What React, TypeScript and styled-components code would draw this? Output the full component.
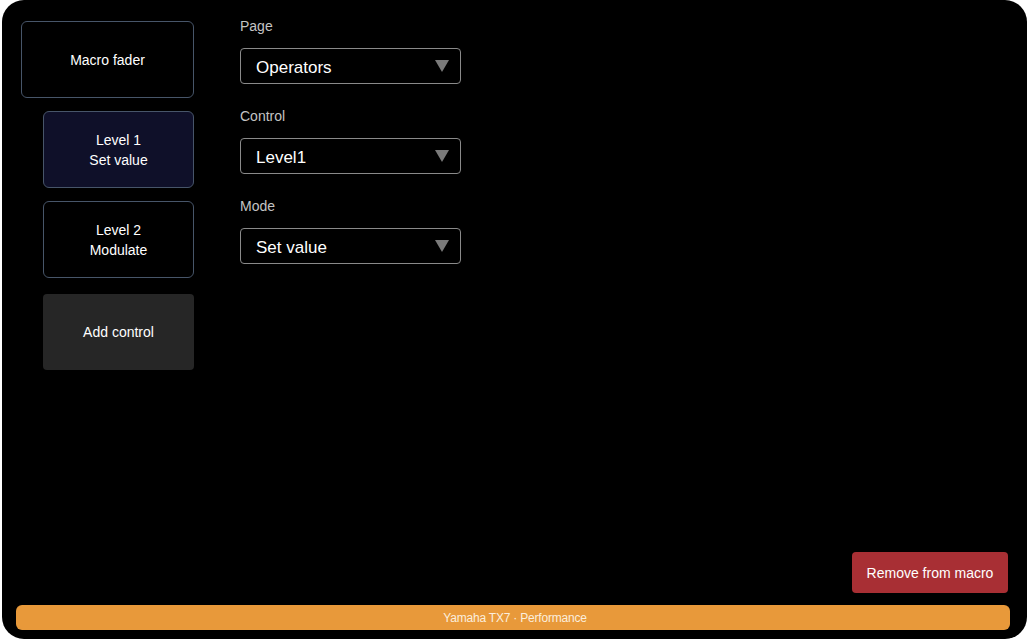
import styled, { createGlobalStyle } from "styled-components";

// ---------------------------------------------------------------------

const fields = [
  { label: "Page", value: "Operators" },
  { label: "Control", value: "Level1" },
  { label: "Mode", value: "Set value" },
];

export default function App() {
  return (
    <>
      <GlobalStyle />
      <Frame>
        <Body>
          <Sidebar>
            <MacroTile>Macro fader</MacroTile>
            <ControlTile $active>
              Level 1<br />
              Set value
            </ControlTile>
            <ControlTile>
              Level 2<br />
              Modulate
            </ControlTile>
            <AddTile>Add control</AddTile>
          </Sidebar>

          <Editor>
            {fields.map((f) => (
              <Field key={f.label}>
                <FieldLabel>{f.label}</FieldLabel>
                <Select>
                  <span>{f.value}</span>
                  <Caret viewBox="0 0 14 12">
                    <polygon points="0,0 14,0 7,12" />
                  </Caret>
                </Select>
              </Field>
            ))}
          </Editor>
        </Body>

        <ActionRow>
          <RemoveButton>Remove from macro</RemoveButton>
        </ActionRow>

        <StatusBar>Yamaha TX7 · Performance</StatusBar>
      </Frame>
    </>
  );
}

//style
const GlobalStyle = createGlobalStyle`
  html, body {
    margin: 0;
    background: #ffffff;
    font-family: "Liberation Sans", Arial, sans-serif;
  }
`;

const Frame = styled.div`
  margin-left: 2px;
  width: 1025px;
  height: 639px;
  border-radius: 22px;
  background: #000000;
  display: flex;
  flex-direction: column;
  box-sizing: border-box;
  padding: 0 17px 9px 14px;
  overflow: hidden;
`;

const Body = styled.div`
  flex: 1;
  display: flex;
  align-items: flex-start;
`;

const Sidebar = styled.div`
  width: 173px;
  margin-left: 5px;
  padding-top: 21px;
  display: flex;
  flex-direction: column;
  align-items: flex-end;
  gap: 13px;
`;

const Tile = styled.div`
  box-sizing: border-box;
  display: flex;
  align-items: center;
  justify-content: center;
  text-align: center;
  color: #ffffff;
  font-size: 14px;
  line-height: 20px;
  border-radius: 6px;
`;

const MacroTile = styled(Tile)`
  width: 173px;
  height: 77px;
  border: 1px solid #475569;
`;

const ControlTile = styled(Tile)<{ $active?: boolean }>`
  width: 151px;
  height: 77px;
  border: 1px solid #475569;
  background: ${(p) => (p.$active ? "#0f1029" : "#000000")};
`;

const AddTile = styled(Tile)`
  width: 151px;
  height: 76px;
  margin-top: 3px;
  background: #262626;
  border-radius: 4px;
`;

const Editor = styled.div`
  margin-left: 46px;
  padding-top: 17px;
  display: flex;
  flex-direction: column;
  gap: 23px;
`;

const Field = styled.div`
  display: flex;
  flex-direction: column;
  gap: 13px;
`;

const FieldLabel = styled.div`
  color: #c4c4c4;
  font-size: 14px;
  line-height: 18px;
`;

const Select = styled.div`
  box-sizing: border-box;
  width: 221px;
  height: 36px;
  border: 1px solid #8a8a8a;
  border-radius: 4px;
  padding: 3px 11px 0 15px;
  display: flex;
  align-items: center;
  justify-content: space-between;
  color: #ffffff;
  font-size: 17px;
`;

const Caret = styled.svg`
  width: 14px;
  height: 12px;
  margin-top: -4px;
  fill: #7a7a7a;
`;

const ActionRow = styled.div`
  display: flex;
  justify-content: flex-end;
  padding-right: 2px;
  margin-bottom: 12px;
`;

const RemoveButton = styled.button`
  width: 156px;
  height: 41px;
  border: none;
  border-radius: 4px;
  background: #a82f34;
  color: #ffffff;
  font-family: inherit;
  font-size: 14px;
  cursor: pointer;
`;

const StatusBar = styled.div`
  height: 25px;
  border-radius: 6px;
  background: #e8993a;
  color: #fbeedd;
  font-size: 12px;
  letter-spacing: -0.2px;
  padding-left: 4px;
  display: flex;
  align-items: center;
  justify-content: center;
`;
